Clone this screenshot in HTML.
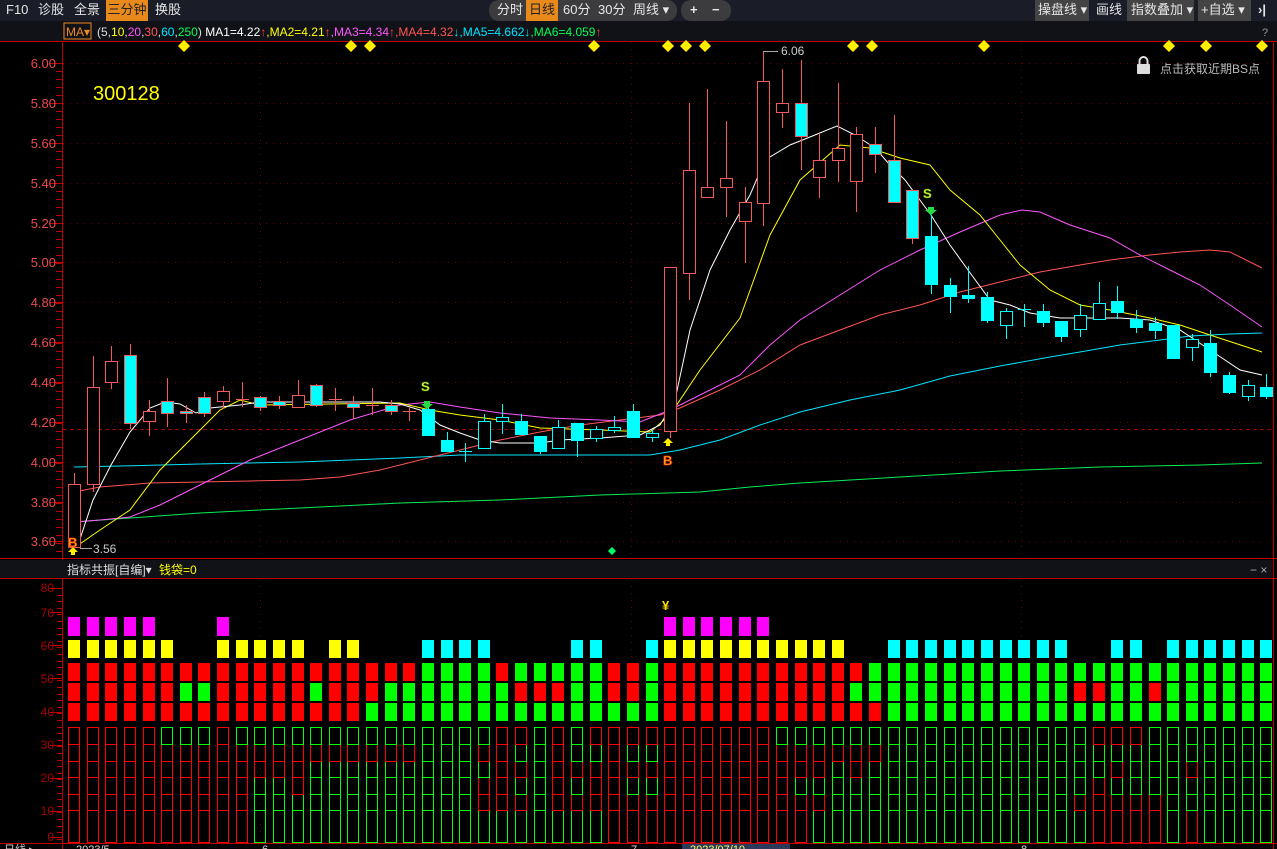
<!DOCTYPE html>
<html><head><meta charset="utf-8">
<style>
*{margin:0;padding:0;box-sizing:border-box}
body{width:1277px;height:849px;background:#000;overflow:hidden;position:relative;font-family:"Liberation Sans","Noto Sans CJK SC",sans-serif;color:#ddd}
.tb{position:absolute;left:0;top:0;width:1277px;height:21px;background:#1a1c28}
.tb span{position:absolute;top:0;height:21px;line-height:20px;font-size:13px;color:#e6e6e6}
.pill{position:absolute;top:0;height:21px;background:#3c3c3e;border-radius:10px}
.gbtn{background:#444;padding:0 4px}
.mab{position:absolute;left:0;top:21px;width:1277px;height:20px;background:#111217}
#c{position:absolute;left:0;top:0}
</style></head><body>
<div class="tb">
<span style="left:6px">F10</span>
<span style="left:38px">诊股</span>
<span style="left:74px">全景</span>
<span style="left:106px;width:42px;background:#e8891c;color:#222;text-align:center">三分钟</span>
<span style="left:155px">换股</span>
<div class="pill" style="left:489px;width:188px"></div>
<span style="left:497px">分时</span>
<span style="left:526px;width:32px;background:#e8891c;color:#222;text-align:center">日线</span>
<span style="left:563px">60分</span>
<span style="left:598px">30分</span>
<span style="left:633px">周线 ▾</span>
<div class="pill" style="left:681px;width:50px"></div>
<span style="left:690px;font-weight:bold">+</span>
<span style="left:712px;font-weight:bold">−</span>
<span style="left:1035px;width:54px;background:#444;padding-left:3px">操盘线 ▾</span>
<span style="left:1096px">画线</span>
<span style="left:1127px;width:67px;background:#444;padding-left:4px">指数叠加 ▾</span>
<span style="left:1198px;width:53px;background:#444;padding-left:3px">+自选 ▾</span>
<span style="left:1258px;font-weight:bold">›|</span>
</div>
<div class="mab"></div>
<svg id="c" width="1277" height="849" xmlns="http://www.w3.org/2000/svg" font-family="Liberation Sans, Noto Sans CJK SC, sans-serif">
<g id="dyn"></g>
<rect x="64" y="23" width="27" height="16" fill="none" stroke="#f08a20"/>
<text x="66" y="36" font-size="12" fill="#f08a20">MA▾</text>
<text x="97" y="36" font-size="12"><tspan fill="#ddd">(5,</tspan><tspan fill="#ffff00">10</tspan><tspan fill="#ddd">,</tspan><tspan fill="#ff55ff">20</tspan><tspan fill="#ddd">,</tspan><tspan fill="#ff5555">30</tspan><tspan fill="#ddd">,</tspan><tspan fill="#00e5ff">60</tspan><tspan fill="#ddd">,</tspan><tspan fill="#00ff55">250</tspan><tspan fill="#ddd">)  </tspan><tspan fill="#fff"> MA1=4.22</tspan><tspan fill="#ff4444">↑</tspan><tspan fill="#ffff00">,MA2=4.21</tspan><tspan fill="#ff4444">↑</tspan><tspan fill="#ff55ff">,MA3=4.34</tspan><tspan fill="#ff4444">↑</tspan><tspan fill="#ff5555">,MA4=4.32</tspan><tspan fill="#00e5ff">↓,MA5=4.662↓</tspan><tspan fill="#00ff55">,MA6=4.059</tspan><tspan fill="#ff4444">↑</tspan></text>
<text x="1262" y="36" font-size="11" fill="#999">?</text>
<g font-size="13" fill="#e84c4c" text-anchor="end">
<text x="56" y="68">6.00</text><text x="56" y="108">5.80</text><text x="56" y="148">5.60</text><text x="56" y="188">5.40</text><text x="56" y="228">5.20</text><text x="56" y="267">5.00</text><text x="56" y="307">4.80</text><text x="56" y="347">4.60</text><text x="56" y="387">4.40</text><text x="56" y="427">4.20</text><text x="56" y="467">4.00</text><text x="56" y="507">3.80</text><text x="56" y="546">3.60</text>
</g>
<text x="93" y="100" font-size="20" fill="#ffff00">300128</text>
<text x="1160" y="73" font-size="12" fill="#bbb">点击获取近期BS点</text>
<g fill="#ddd"><rect x="1137" y="64" width="13" height="10" rx="1"/><path d="M1139.5 64v-3a4 4 0 0 1 8 0v3" fill="none" stroke="#ddd" stroke-width="2"/></g>
<text x="781" y="55" font-size="12" fill="#ccc">6.06</text>
<text x="93" y="553" font-size="12" fill="#ccc">3.56</text>
<g font-size="13" font-weight="bold" fill="#ffff44" stroke="#3a8a00" stroke-width="0.6"><text x="421" y="391">S</text><text x="923" y="198">S</text></g>
<g font-size="13" font-weight="bold" fill="#ffcc00" stroke="#e02020" stroke-width="0.8"><text x="68" y="547">B</text><text x="663" y="465">B</text></g>
<text x="662" y="610" font-size="13" font-weight="bold" fill="#ffdd00">¥</text>
<rect x="0" y="560" width="1272" height="18" fill="#111217"/>
<text x="67" y="574" font-size="12" fill="#ddd">指标共振[自编]▾</text>
<text x="159" y="574" font-size="12" fill="#ffff00">钱袋=0</text>
<text x="1250" y="574" font-size="12" fill="#aaa">−  ×</text>
<g font-size="12" fill="#a80000" text-anchor="end">
<text x="54" y="592">80</text><text x="54" y="617">70</text><text x="54" y="650">60</text><text x="54" y="683">50</text><text x="54" y="716">40</text><text x="54" y="749">30</text><text x="54" y="782">20</text><text x="54" y="815">10</text><text x="54" y="841">0</text>
</g>
<rect x="682" y="844" width="108" height="5" fill="#2a3a5a"/>
<text x="4" y="853" font-size="11" fill="#ccc">日线 ▸</text>
<text x="76" y="853" font-size="11" fill="#ddd">2023/5</text>
<text x="262" y="853" font-size="11" fill="#ddd">6</text>
<text x="631" y="853" font-size="11" fill="#ddd">7</text>
<text x="690" y="853" font-size="11" fill="#ffff66">2023/07/10</text>
<text x="1021" y="853" font-size="11" fill="#ddd">8</text>
</svg>
<script>
var s='';
function L(x1,y1,x2,y2,c,extra){s+='<line x1="'+x1+'" y1="'+y1+'" x2="'+x2+'" y2="'+y2+'" stroke="'+c+'" '+(extra||'')+'/>';}
// frame
L(62.5,41,62.5,849,'#c00000');L(0,41.5,1277,41.5,'#c00000');L(1273.5,41,1273.5,849,'#c00000');
L(0,558.5,1277,558.5,'#c00000');L(0,578.5,1277,578.5,'#c00000');L(0,843.5,1277,843.5,'#c00000');
// grid
var gy=[63,103,143,183,223,262,302,342,382,422,462,502,541];
gy.forEach(function(y){L(63,y+.5,1272,y+.5,'#6a0000','stroke-dasharray="1 6"');L(50,y+.5,62,y+.5,'#c00000');});
for(var y=63;y<558;y+=8){L(56,y+.5,62,y+.5,'#c00000');}
[260,631,1021].forEach(function(x){L(x+.5,42,x+.5,558,'#6a0000','stroke-dasharray="1 6"');L(x+.5,579,x+.5,843,'#6a0000','stroke-dasharray="1 6"');});
L(63,429.5,1272,429.5,'#a00000','stroke-dasharray="4 3"');
// indicator ticks
[588,612,645,678,712,745,778,811,837].forEach(function(y){L(50,y+.5,62,y+.5,'#c00000');});
for(var y=588;y<843;y+=6.6){L(57,Math.round(y)+.5,62,Math.round(y)+.5,'#c00000');}
// diamonds
[184,351,370,594,668,686,705,853,872,984,1169,1206,1262].forEach(function(x){s+='<polygon points="'+x+',40 '+(x+6)+',46 '+x+',52 '+(x-6)+',46" fill="#ffee00" stroke="#aa8800" stroke-width=".5"/>';});
s+='<polygon points="612,547 616,551 612,555 608,551" fill="#00ff66"/>';
// MA lines
function P(pts,c){s+='<polyline fill="none" stroke="'+c+'" stroke-width="1" points="'+pts+'"/>';}
P('74,522 200,513 300,508 400,503 500,500 600,495 700,492 750,487 800,483 900,477 1000,471 1100,467 1200,465 1262,463','#00ee55');
P('74,467 120,466 200,464 300,462 400,458 460,455 560,455 650,455 680,450 720,440 760,425 800,412 850,400 900,390 950,376 1000,366 1050,357 1080,352 1120,345 1160,340 1190,336 1230,334 1262,333','#00e5ff');
P('74,492 100,487 150,483 200,482 250,481 300,480 340,477 380,470 420,460 460,450 500,440 540,432 580,425 620,420 660,415 680,408 720,390 760,370 800,345 840,330 880,315 920,305 960,292 1000,282 1040,272 1080,265 1110,260 1150,255 1180,252 1210,250 1230,252 1262,268','#ff5555');
P('74,522 100,520 130,517 160,505 200,485 250,460 300,440 350,420 400,405 430,402 460,407 500,413 550,418 600,420 640,422 670,410 700,395 740,375 770,345 800,320 840,295 880,270 920,250 960,232 1000,215 1022,210 1040,212 1070,225 1110,238 1140,255 1170,270 1200,285 1230,305 1262,327','#ff55ff');
P('74,548 100,530 130,510 160,470 190,440 220,410 240,400 260,405 400,403 430,410 460,415 500,420 540,428 600,430 650,432 670,415 700,370 740,318 770,235 800,180 840,145 870,148 900,158 930,165 950,190 980,215 1000,240 1020,265 1050,290 1080,305 1110,310 1150,318 1180,325 1210,335 1262,352','#ffff00');
P('78,545 93,500 111,465 130,432 150,408 165,402 180,404 196,413 210,408 240,405 260,402 300,402 380,402 400,404 420,410 440,425 460,433 480,440 500,443 540,443 560,440 600,438 640,435 660,425 675,400 690,330 710,270 730,230 750,195 765,160 790,145 810,137 837,126 855,135 875,148 890,165 905,180 931,215 950,245 968,270 990,300 1010,305 1030,313 1060,318 1090,318 1120,318 1150,320 1180,330 1210,350 1240,370 1262,375','#ffffff');
// candles [i,top,bot,high,low,type]
var C=[[0,484,547,473,548,'r'],[1,387,484,356,492,'r'],[2,361,382,346,389,'r'],[3,355,423,344,429,'rc'],[4,411,421,400,436,'r'],[5,401,413,378,427,'rc'],[6,411,413,405,423,'rc'],[7,397,413,392,417,'rc'],[8,391,401,386,409,'r'],[9,399,399,382,407,'x'],[10,397,407,396,411,'rc'],[11,401,405,396,409,'rc'],[12,395,407,380,407,'r'],[13,385,405,384,407,'rc'],[14,399,399,388,411,'x'],[15,403,407,396,419,'rc'],[16,405,405,388,415,'x'],[17,405,411,400,415,'rc'],[18,411,411,407,421,'x'],[19,409,435,407,435,'c'],[20,440,451,432,451,'c'],[21,451,451,443,462,'xc'],[22,421,448,414,449,'h'],[23,417,421,404,434,'h'],[24,421,434,414,434,'c'],[25,436,451,436,454,'c'],[26,427,448,420,448,'h'],[27,423,440,423,457,'c'],[28,429,438,426,442,'h'],[29,427,430,416,433,'h'],[30,411,437,404,437,'c'],[31,433,437,429,442,'h'],[32,267,431,267,438,'r'],[33,170,273,103,300,'r'],[34,187,197,89,198,'r'],[35,178,187,121,217,'r'],[36,202,221,187,263,'r'],[37,81,203,51,226,'r'],[38,103,112,69,128,'r'],[39,103,136,60,170,'rc'],[40,160,177,133,198,'r'],[41,148,160,83,182,'r'],[42,134,181,127,212,'r'],[43,144,154,127,173,'rc'],[44,160,202,115,203,'rc'],[45,190,238,190,244,'rc'],[46,236,284,215,294,'c'],[47,285,296,278,313,'c'],[48,295,298,266,303,'c'],[49,297,320,292,323,'c'],[50,311,325,308,339,'h'],[51,309,309,304,327,'xc'],[52,311,322,304,327,'c'],[53,321,336,321,342,'c'],[54,315,329,304,337,'h'],[55,303,319,282,320,'h'],[56,301,312,286,319,'c'],[57,319,327,310,333,'c'],[58,323,330,317,339,'c'],[59,325,358,325,358,'c'],[60,339,347,334,361,'h'],[61,343,372,330,377,'c'],[62,375,392,372,394,'c'],[63,385,396,380,401,'h'],[64,387,396,374,399,'c']];
var RC='#f55a5a',CY='#00ffff';
C.forEach(function(d){var x=Math.round(68+18.63*d[0]),cx=x+6.5,t=d[5];
 var wc=(t=='r'||t=='rc'||t=='x')?RC:CY;
 L(cx,d[3],cx,d[4],wc);
 if(t=='x'||t=='xc'){L(x,d[1]+.5,x+13,d[1]+.5,wc);return;}
 var h=Math.max(d[2]-d[1],2),fill=(t=='r'||t=='h')?'#000':CY,st=(t=='c'||t=='h')?CY:RC;
 s+='<rect x="'+(x+.5)+'" y="'+(d[1]+.5)+'" width="12" height="'+h+'" fill="'+fill+'" stroke="'+st+'"/>';
});
L(763,51.5,778,51.5,'#aaa');L(80,548.5,92,548.5,'#aaa');
s+='<polygon points="424,401 430,401 430,404 433,404 427,409 421,404 424,404" fill="#22dd44"/>';
s+='<polygon points="928,207 934,207 934,210 937,210 931,215 925,210 928,210" fill="#22dd44"/>';
s+='<polygon points="668,438 673,443 670,443 670,446 666,446 666,443 663,443" fill="#ffee00"/>';
s+='<polygon points="73,547 78,552 75,552 75,555 71,555 71,552 68,552" fill="#ffee00"/>';
// indicator
var R='#ff0000',G='#00ff00',Y='#ffff00',M='#ff00ff',Cc='#00ffff';
function rng(a,b){var r=[];for(var i=a;i<=b;i++)r.push(i);return r;}
var mag=[0,1,2,3,4,8].concat(rng(32,37));
var yel=rng(0,5).concat(rng(8,12),[14,15],rng(32,41));
var cya=rng(19,22).concat([27,28,31],rng(44,53),[56,57],rng(59,64));
var r1g=rng(19,22).concat(rng(24,28),[31],rng(43,64));
var r2g=[6,7,13,17].concat(rng(18,23),[27,28,31],rng(42,53),[56,57],rng(59,64));
var r3g=rng(16,31).concat(rng(44,64));
var segs={};function S(a,b,v){for(var i=a;i<=b;i++)segs[i]=v;}
S(0,4,'RRRRRR');S(5,7,'GRRRRR');S(8,8,'RRRRRR');S(9,9,'GRRRRR');S(10,11,'GRRGGG');S(12,12,'GRRRGG');S(13,18,'GRGGGG');S(19,21,'GGGGGG');S(22,22,'GRGRRG');S(23,23,'RRRRRG');S(24,24,'RGRGRG');S(25,25,'GGGGGG');S(26,26,'RRRRRG');S(27,27,'GGRGRG');S(28,28,'RGRRRG');S(29,29,'RRRRRR');S(30,31,'RGRGRR');S(32,37,'RRRRRR');S(38,38,'GRRRRR');S(39,39,'GRRGRR');S(40,40,'GRRGRG');S(41,41,'GRGGGG');S(42,42,'GRRGGG');S(43,43,'GRGGGG');S(44,53,'GGGGGG');S(54,54,'GGGGRG');S(55,55,'RGGRRR');S(56,56,'RGRGRR');S(57,57,'RGGGRR');S(58,58,'GGGGRR');S(59,59,'GGGGGG');S(60,60,'GGRGGR');S(61,64,'GGGGGG');
var sb=[727,744,761,777,794,810,842];
function B(x,y,h,c){s+='<rect x="'+x+'" y="'+y+'" width="12" height="'+h+'" fill="'+c+'"/>';}
for(var i=0;i<65;i++){var x=Math.round(68+18.63*i);
 if(mag.indexOf(i)>=0)B(x,617,19,M);
 if(yel.indexOf(i)>=0)B(x,640,18,Y);else if(cya.indexOf(i)>=0)B(x,640,18,Cc);
 B(x,663,18,r1g.indexOf(i)>=0?G:R);B(x,683,18,r2g.indexOf(i)>=0?G:R);B(x,703,18,r3g.indexOf(i)>=0?G:R);
 var sg=segs[i];
 for(var k=5;k>=0;k--){var c=sg[k]=='R'?R:G;s+='<rect x="'+(x+.5)+'" y="'+(sb[k]+.5)+'" width="11" height="'+(sb[k+1]-sb[k])+'" fill="none" stroke="'+c+'"/>';}
}
document.getElementById('dyn').innerHTML=s;
</script>
</body></html>
